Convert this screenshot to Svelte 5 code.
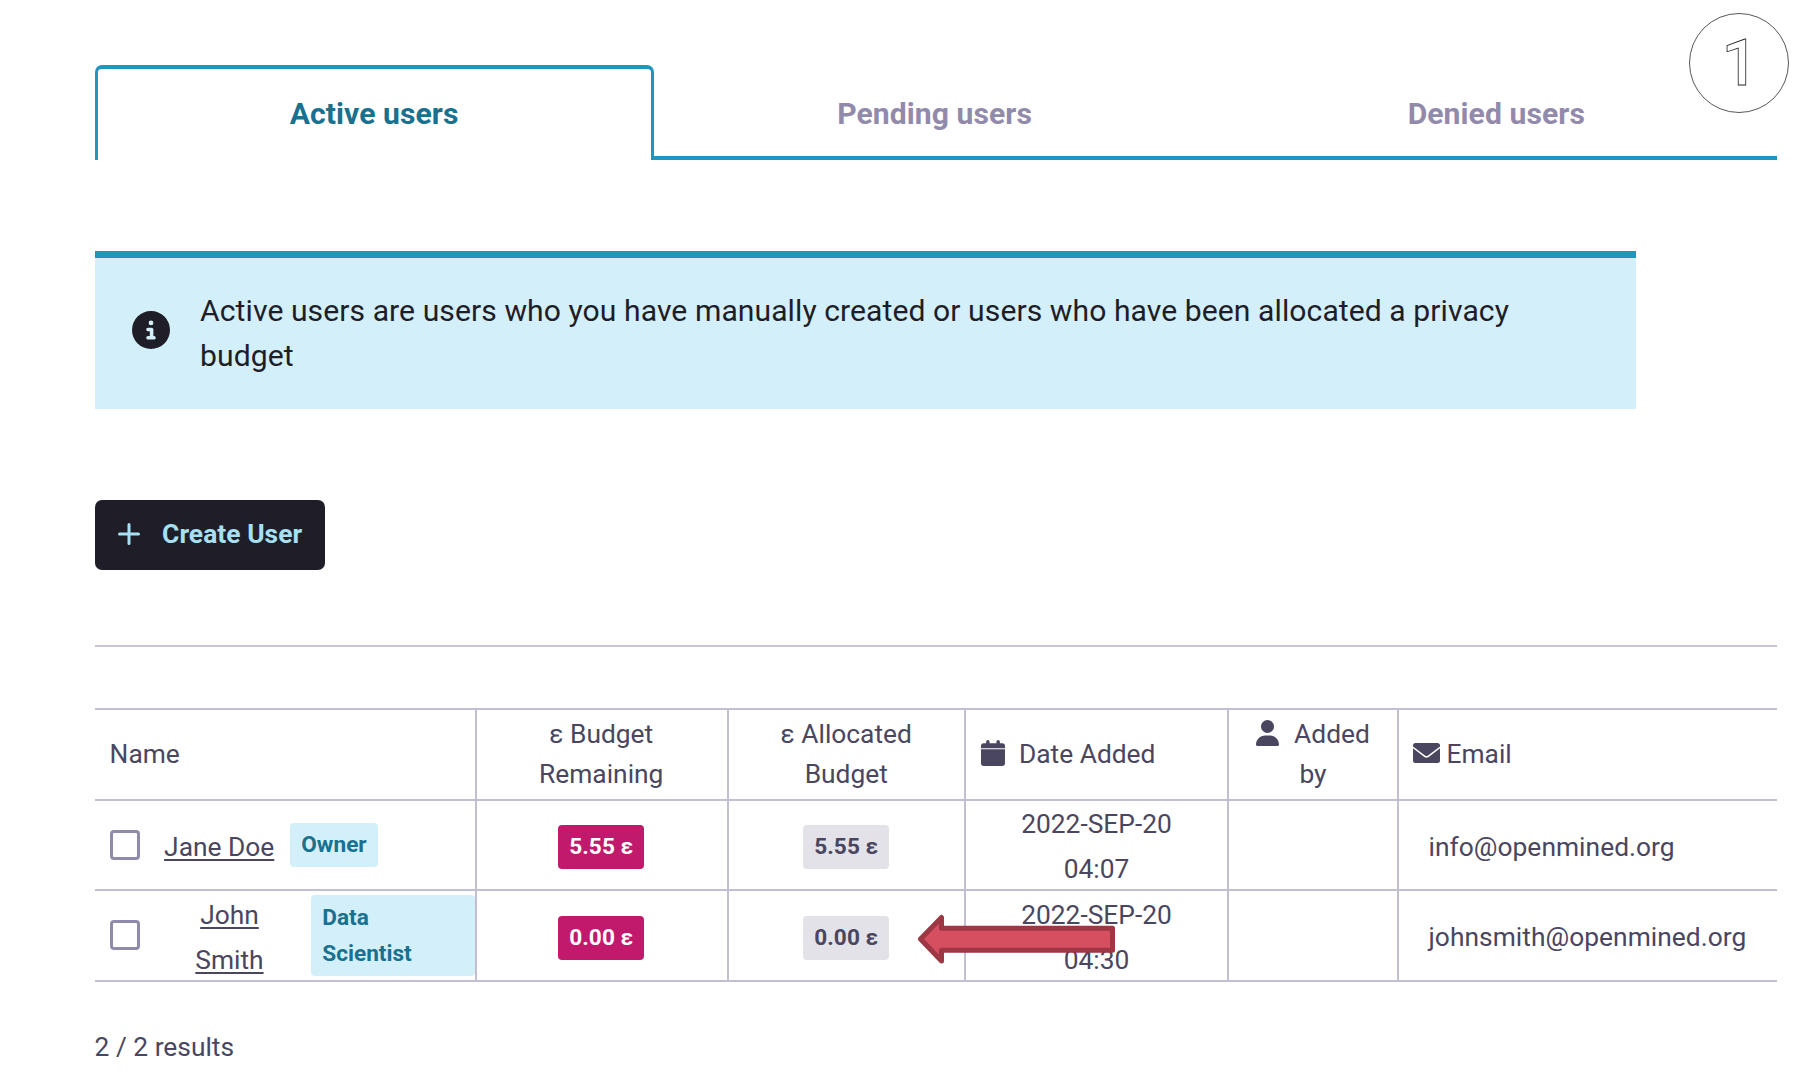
<script>
  const tabs = ['Active users', 'Pending users', 'Denied users'];
  const users = [
    { name: 'Jane Doe', role: 'Owner', budget: '5.55 ε', date: '2022-SEP-20', time: '04:07', email: 'info@openmined.org' },
    { name: 'John Smith', role: 'Data Scientist', budget: '0.00 ε', date: '2022-SEP-20', time: '04:30', email: 'johnsmith@openmined.org', wrap: true }
  ];
</script>

<main>
  <nav class="tabs">
    {#each tabs as tab, i}
      <div class="tab" class:active={i === 0}><span>{tab}</span></div>
    {/each}
  </nav>

  <section class="notice">
    <svg class="info" viewBox="0 0 512 512"><path fill="#1f1d28" d="M256 512a256 256 0 1 0 0-512a256 256 0 1 0 0 512zM216 336h24v-64h-24c-13 0-24-11-24-24s11-24 24-24h48c13 0 24 11 24 24v88h8c13 0 24 11 24 24s-11 24-24 24h-80c-13 0-24-11-24-24s11-24 24-24zm40-208a32 32 0 1 1 0 64a32 32 0 1 1 0-64z"/></svg>
    <p>Active users are users who you have manually created or users who have been allocated a privacy<br />budget</p>
  </section>

  <button class="create">
    <svg viewBox="0 0 22 22"><path d="M11 1.500v19M1.500 11h19" stroke="#a7e0f2" stroke-width="3" stroke-linecap="round"/></svg>
    <span>Create User</span>
  </button>

  <hr />

  <div class="table">
    <div class="row head">
      <div class="cell name">Name</div>
      <div class="cell mid">ε Budget<br />Remaining</div>
      <div class="cell mid allocated">ε Allocated<br />Budget</div>
      <div class="cell date">
        <svg class="cal" viewBox="0 0 448 512" preserveAspectRatio="none"><path d="M96 32V64H48C21.500 64 0 85.500 0 112v48H448V112c0-26.500-21.500-48-48-48H352V32c0-17.700-14.300-32-32-32s-32 14.300-32 32V64H160V32c0-17.700-14.300-32-32-32S96 14.300 96 32zM448 180H0V464c0 26.500 21.500 48 48 48H400c26.500 0 48-21.500 48-48V180z"/></svg>
        <span>Date Added</span>
      </div>
      <div class="cell mid added">
        <span class="line"><svg class="person" viewBox="0 0 448 512" preserveAspectRatio="none"><path d="M224 256A128 128 0 1 0 224 0a128 128 0 1 0 0 256zm-45.700 48C79.800 304 0 383.800 0 482.300C0 498.700 13.300 512 29.700 512H418.300c16.400 0 29.700-13.300 29.700-29.700C448 383.800 368.200 304 269.700 304H178.300z"/></svg><span>Added</span></span>
        <span>by</span>
      </div>
      <div class="cell email-head">
        <svg class="mail" viewBox="0 0 27 20"><path d="M2.500 0h22A2.500 2.500 0 0 1 27 2.500v1L15 12.600q-1.500 1-3 0L0 3.500v-1A2.500 2.500 0 0 1 2.500 0zM0 5.300l11.300 8.700q2.200 1.500 4.400 0L27 5.300v12.200a2.500 2.500 0 0 1-2.500 2.500h-22A2.500 2.500 0 0 1 0 17.500z"/></svg>
        <span>Email</span>
      </div>
    </div>
    {#each users as user}
      <div class="row" class:tall={user.wrap}>
        <div class="cell person-cell">
          <span class="check"></span>
          <span class="user-name">{user.name}</span>
          <span class="role">{user.role}</span>
        </div>
        <div class="cell mid"><span class="badge pink">{user.budget}</span></div>
        <div class="cell mid allocated"><span class="badge gray">{user.budget}</span></div>
        <div class="cell mid when">{user.date}<br />{user.time}</div>
        <div class="cell"></div>
        <div class="cell email">{user.email}</div>
      </div>
    {/each}
  </div>

  <p class="results">2 / 2 results</p>

  <svg class="step" viewBox="0 0 102 102">
    <circle cx="51" cy="51" r="49.500" />
    <text x="52" y="73">1</text>
  </svg>
  <svg class="arrow" viewBox="0 0 200 52">
    <path d="M4.500 26L25.500 4.500V15.300H196.500V37.300H25.500V48z"/>
  </svg>
</main>

<style>
  :global(body) { background: #fff; }
  main {
    position: relative;
    box-sizing: border-box;
    width: 1800px;
    height: 1080px;
    padding: 65px 23px 0 94.600px;
    overflow: hidden;
    font-family: Roboto, "Liberation Sans", sans-serif;
    font-size: 26.350px;
    color: #4a4660;
  }
  p { margin: 0; }
  svg { display: block; flex: none; }
  .tabs { display: grid; grid-template-columns: 559px 562px 1fr; height: 95px; }
  .tab {
    display: flex;
    align-items: center;
    justify-content: center;
    box-sizing: border-box;
    border-bottom: 4px solid #1f96bf;
    padding-top: 6px;
    font-size: 30.100px;
    font-weight: 700;
    letter-spacing: 0.080px;
    color: #928aab;
  }
  .tab.active {
    border: 3px solid #1f96bf;
    border-top-width: 4px;
    border-bottom: 0;
    border-radius: 7px 7px 0 0;
    padding: 0 0 2px;
    color: #17718f;
  }
  .notice {
    display: flex;
    align-items: center;
    box-sizing: border-box;
    width: 1541px;
    height: 158px;
    margin-top: 91px;
    padding: 0 0 7px 37.500px;
    border-top: 7px solid #1f96bf;
    background: #d3effa;
    color: #1f1d28;
    font-size: 30.100px;
    line-height: 45px;
    letter-spacing: 0.073px;
  }
  .info { width: 38px; height: 38px; margin-right: 30px; }
  .notice p { padding-top: 5px; white-space: nowrap; }
  .create {
    display: flex;
    align-items: center;
    width: 230px;
    height: 70px;
    box-sizing: border-box;
    margin: 91px 0 0;
    padding: 0 0 3px 23px;
    border: 0;
    border-radius: 7px;
    background: #1f1d28;
    color: #a7e0f2;
    font: 700 26.350px Roboto, sans-serif;
    letter-spacing: 0.060px;
  }
  .create svg { width: 22px; height: 22px; margin-right: 22.500px; }
  hr { height: 2px; margin: 75px 0 61px; border: 0; background: #c7c4d6; }
  .table { border-bottom: 2px solid #c2bfd1; }
  .row {
    display: grid;
    grid-template-columns: 380.400px 252px 237px 263px 170px 1fr;
    grid-template-rows: 100%;
    box-sizing: border-box;
    height: 90px;
    border-top: 2px solid #c2bfd1;
    line-height: 45px;
  }
  .head, .tall { height: 91px; }
  .head { line-height: 40px; }
  .cell {
    display: flex;
    align-items: center;
    box-sizing: border-box;
    min-width: 0;
    white-space: nowrap;
  }
  .head .cell { padding-bottom: 2px; }
  .cell + .cell { border-left: 2px solid #c2bfd1; }
  .mid { justify-content: center; text-align: center; padding-right: 1.500px; }
  .allocated { padding-right: 0.500px; }
  .name { padding-left: 15px; }
  .date { padding-left: 15px; gap: 14px; }
  .cal { width: 24px; height: 26px; margin-bottom: 1px; }
  .head svg { fill: #4a4660; }
  .added { flex-direction: column; padding-right: 0; }
  .line { display: flex; align-items: center; gap: 15px; }
  .person { width: 23px; height: 26px; margin-bottom: 1px; }
  .email-head { padding-left: 14.500px; gap: 6px; }
  .mail { width: 27px; height: 20px; margin-bottom: 1px; }
  .person-cell { padding-left: 15.500px; }
  .check {
    flex: none;
    box-sizing: border-box;
    width: 30px;
    height: 30px;
    margin-right: 24px;
    border: 3px solid #928aab;
    border-radius: 4px;
  }
  .user-name {
    padding-top: 5px;
    text-decoration: underline;
    text-decoration-thickness: 2px;
    text-underline-offset: 3px;
    text-decoration-skip-ink: none;
  }
  .role {
    box-sizing: border-box;
    margin-left: 16px;
    padding: 4px 11px;
    border-radius: 4px;
    background: #d3effa;
    color: #17718f;
    font-size: 22.600px;
    font-weight: 700;
    line-height: 36px;
  }
  .tall .check { margin-bottom: 2px; }
  .tall .user-name { box-sizing: border-box; width: 133px; padding: 5px 33px 0 31px; text-align: center; white-space: normal; }
  .tall .role { width: 164px; margin-left: 14.500px; padding: 5px 50px 4px 11px; white-space: normal; }
  .badge {
    box-sizing: border-box;
    width: 86px;
    height: 44px;
    margin-top: 3px;
    border-radius: 4px;
    font-size: 22.600px;
    font-weight: 700;
    letter-spacing: 0.050px;
    line-height: 44px;
  }
  .tall .badge { margin-top: 4px; }
  .pink { background: #c1196c; color: #fff; }
  .gray { background: #e3e2e8; }
  .when { padding: 4px 0 0; }
  .tall .when { padding-top: 5px; }
  .email { padding: 4px 0 0 29.500px; letter-spacing: 0.040px; }
  .results { margin-top: 45px; line-height: 40px; }
  .step { position: absolute; left: 1688px; top: 12px; width: 102px; height: 102px; }
  .step circle { fill: none; stroke: #444; stroke-width: 0.900; }
  .step text { font: 500 64px Roboto, sans-serif; fill: none; stroke: #222; stroke-width: 0.800; text-anchor: middle; }
  .arrow { position: absolute; left: 916px; top: 913px; width: 200px; height: 52px; }
  .arrow path { fill: #d64f60; stroke: #9c3743; stroke-width: 5; stroke-linejoin: round; }
</style>
